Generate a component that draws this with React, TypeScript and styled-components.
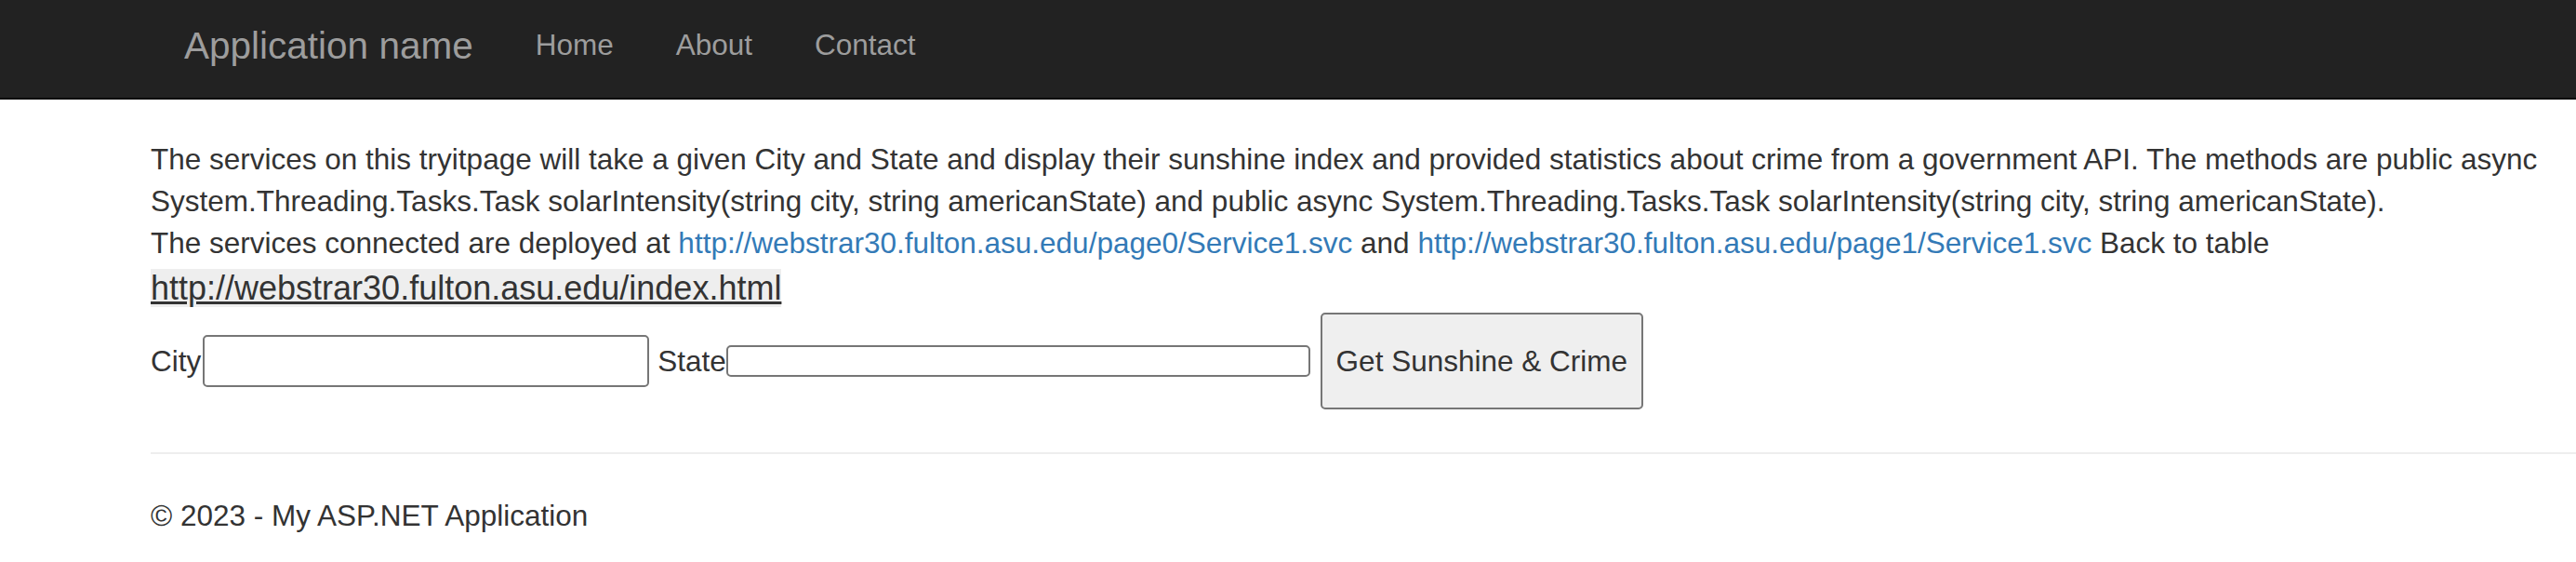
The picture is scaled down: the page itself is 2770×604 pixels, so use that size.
import { FunctionComponent } from 'react';
import styled, { createGlobalStyle } from 'styled-components';

const GlobalStyle = createGlobalStyle`
  html, body {
    margin: 0;
    padding: 0;
    background: #fff;
  }
  body {
    font-family: "Liberation Sans", Arial, Helvetica, sans-serif;
    font-size: 31.5px;
    line-height: 1.42857;
    color: #333;
  }
`;

const NavBar = styled.nav`
  display: flex;
  align-items: flex-start;
  gap: 67px;
  height: 105px;
  padding-left: 198px;
  background: #222;
  border-bottom: 2px solid #080808;
`;

const Brand = styled.a`
  padding-top: 29px;
  font-size: 40.5px;
  line-height: 40px;
  color: #9d9d9d;
  text-decoration: none;
`;

const NavLink = styled.a`
  padding-top: 33px;
  font-size: 31.5px;
  line-height: 31px;
  color: #9d9d9d;
  text-decoration: none;
`;

const Body = styled.main`
  padding-left: 162px;
`;

const Intro = styled.p`
  margin: 42px 0 0;
`;

const ServiceLink = styled.a`
  color: #337ab7;
  text-decoration: none;
`;

const TableLink = styled.a`
  font-size: 36px;
  color: #333;
  background: #eee;
  text-decoration: underline;
  text-decoration-thickness: 3px;
`;

const FormRow = styled.form`
  display: flex;
  align-items: center;
  margin-top: 1px;
`;

const Label = styled.label<{ $gap?: number }>`
  margin-left: ${(p) => p.$gap ?? 0}px;
  line-height: 45px;
`;

const TextBox = styled.input<{ $w: number; $h: number; $gap?: number }>`
  box-sizing: border-box;
  width: ${(p) => p.$w}px;
  height: ${(p) => p.$h}px;
  margin: 0 0 0 ${(p) => p.$gap ?? 0}px;
  padding: 2px 6px;
  border: 2px solid #767676;
  border-radius: 5px;
  background: #fff;
  font-family: inherit;
  font-size: 28px;
`;

const SubmitButton = styled.button`
  box-sizing: border-box;
  width: 347px;
  height: 104px;
  margin-left: 11px;
  padding: 0;
  border: 2px solid #767676;
  border-radius: 5px;
  background: #efefef;
  color: #333;
  font-family: inherit;
  font-size: 31.5px;
`;

const Rule = styled.hr`
  margin: 46px 0 44px;
  border: 0;
  border-top: 2px solid #eee;
`;

const Footer = styled.footer`
  p {
    margin: 0;
  }
`;

const App: FunctionComponent = () => {
  return (
    <>
      <GlobalStyle />
      <NavBar>
        <Brand href="#">Application name</Brand>
        <NavLink href="#">Home</NavLink>
        <NavLink href="#">About</NavLink>
        <NavLink href="#">Contact</NavLink>
      </NavBar>

      <Body>
        <Intro>
          The services on this tryitpage will take a given City and State and display their sunshine index and
          provided statistics about crime from a government API. The methods are public async
          System.Threading.Tasks.Task solarIntensity(string city, string americanState) and public async
          System.Threading.Tasks.Task solarIntensity(string city, string americanState).
          <br />
          The services connected are deployed at{' '}
          <ServiceLink href="#">http://webstrar30.fulton.asu.edu/page0/Service1.svc</ServiceLink> and{' '}
          <ServiceLink href="#">http://webstrar30.fulton.asu.edu/page1/Service1.svc</ServiceLink> Back to table{' '}
          <TableLink href="#">http://webstrar30.fulton.asu.edu/index.html</TableLink>
        </Intro>

        <FormRow onSubmit={(e) => e.preventDefault()}>
          <Label htmlFor="city">City</Label>
          <TextBox id="city" $w={480} $h={56} $gap={2} />
          <Label htmlFor="state" $gap={9}>State</Label>
          <TextBox id="state" $w={628} $h={34} />
          <SubmitButton type="submit">Get Sunshine &amp; Crime</SubmitButton>
        </FormRow>

        <Rule />

        <Footer>
          <p>© 2023 - My ASP.NET Application</p>
        </Footer>
      </Body>
    </>
  );
};

export default App;
